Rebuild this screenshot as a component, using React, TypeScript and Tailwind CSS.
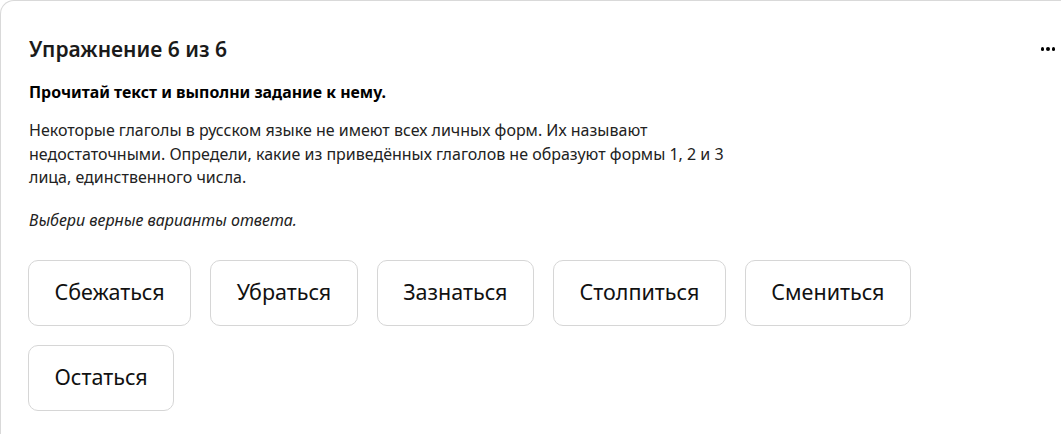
const OPTIONS = ['Сбежаться', 'Убраться', 'Зазнаться', 'Столпиться', 'Смениться', 'Остаться'];

export default function App() {
  return (
    <div className="w-[1061px] h-[434px] overflow-hidden bg-white" style={{ fontFamily: '"Noto Sans", "Open Sans", sans-serif' }}>
      <div className="w-[1100px] h-[600px] border-t border-l border-[#d9d9d9] rounded-tl-[14px] pl-[27px] pt-[33px]">
        <div className="flex items-center justify-between w-[1027px]">
          <h1 className="pl-[1px] text-[21px] font-semibold text-[#1a1a1a] leading-[30px]">Упражнение 6 из 6</h1>
          <div className="flex items-center gap-[2px]">
            <span className="w-[3.5px] h-[3.5px] rounded-full bg-black" />
            <span className="w-[3.5px] h-[3.5px] rounded-full bg-black" />
            <span className="w-[3.5px] h-[3.5px] rounded-full bg-black" />
          </div>
        </div>
        <p className="mt-[17px] pl-[1px] text-[15.9px] font-bold text-black leading-[22px]">Прочитай текст и выполни задание к нему.</p>
        <p className="mt-[16px] pl-[1px] w-[720px] text-[16px] text-[#222] leading-[23.5px]">
          Некоторые глаголы в русском языке не имеют всех личных форм. Их называют недостаточными. Определи, какие из приведённых глаголов не образуют формы 1, 2 и 3 лица, единственного числа.
        </p>
        <p className="mt-[19px] pl-[1px] text-[16px] italic text-[#222] leading-[23px]">Выбери верные варианты ответа.</p>
        <div className="mt-[28px] flex flex-wrap gap-[19px] w-[920px]">
          {OPTIONS.map(o => (
            <button key={o} className="h-[66px] px-[25.5px] border border-[#d6d6d6] rounded-[10px] bg-white text-[21.5px] text-[#111]">
              {o}
            </button>
          ))}
        </div>
      </div>
    </div>
  );
}
